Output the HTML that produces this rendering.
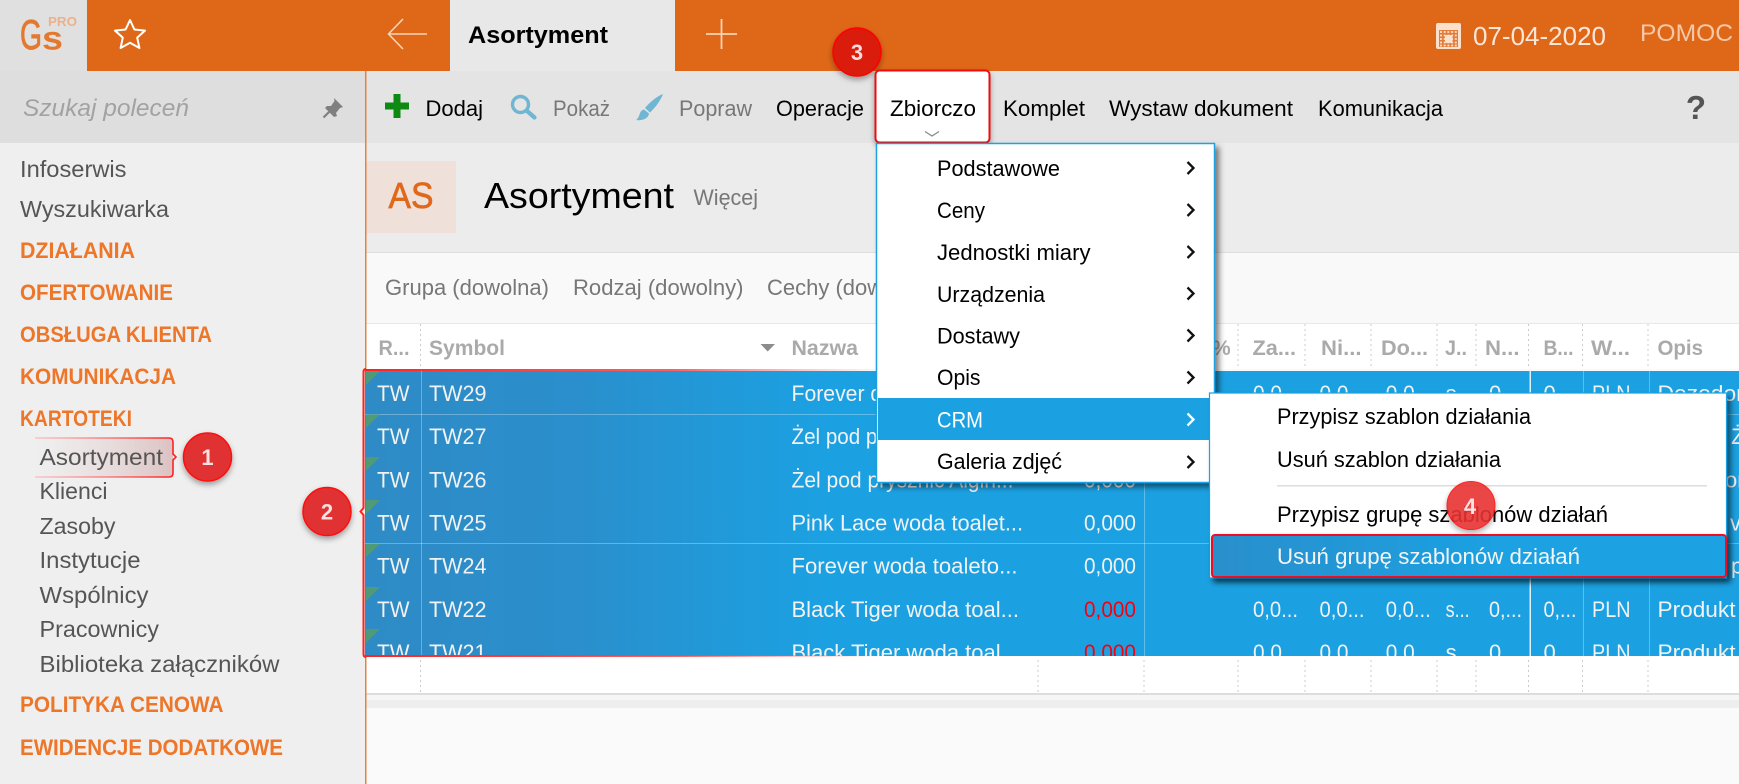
<!DOCTYPE html>
<html lang="pl"><head><meta charset="utf-8"><title>Asortyment</title>
<style>
html,body{margin:0;padding:0;background:#fafafa;width:1739px;height:784px;overflow:hidden}
svg{display:block}
text{font-family:"Liberation Sans",sans-serif;font-size:22px;fill:#000;white-space:pre}
.side{font-size:23.5px;fill:#555}
.cat{font-size:22.5px;font-weight:bold;fill:#ED7628}
.tb{fill:#000}
.gr{fill:#777}
.hd{fill:#aaa;font-weight:bold;font-size:21px}
.w{fill:#f2f2f2}
.r{fill:#f5000f}
.b{font-size:22px;font-weight:bold;fill:#fff;fill-opacity:.85}
</style></head><body>
<svg width="1739" height="784" viewBox="0 0 1739 784" xmlns="http://www.w3.org/2000/svg">
<defs>
<filter id="s1" x="-30%" y="-30%" width="160%" height="170%"><feDropShadow dx="0" dy="3" stdDeviation="3" flood-color="#000" flood-opacity=".35"/></filter>
<filter id="s2" x="-5%" y="-5%" width="112%" height="112%"><feDropShadow dx="4" dy="4" stdDeviation="3" flood-color="#000" flood-opacity=".5"/></filter>
<filter id="s3" x="-5%" y="-20%" width="110%" height="150%"><feDropShadow dx="2" dy="3" stdDeviation="3" flood-color="#000" flood-opacity=".35"/></filter>
<linearGradient id="sel" gradientUnits="userSpaceOnUse" x1="365" y1="0" x2="830" y2="0"><stop offset="0" stop-color="#2E8BC6"/><stop offset=".45" stop-color="#2A8FCC"/><stop offset="1" stop-color="#1BA1E2"/></linearGradient>
<linearGradient id="redf" gradientUnits="userSpaceOnUse" x1="365" y1="0" x2="880" y2="0"><stop offset="0" stop-color="#f22"/><stop offset=".6" stop-color="#f44" stop-opacity=".85"/><stop offset="1" stop-color="#f66" stop-opacity="0"/></linearGradient>
<linearGradient id="asf" gradientUnits="userSpaceOnUse" x1="35" y1="0" x2="173" y2="0"><stop offset="0" stop-color="#e8d8d8" stop-opacity="0"/><stop offset="1" stop-color="#dcc2c2"/></linearGradient>
<linearGradient id="asl" gradientUnits="userSpaceOnUse" x1="35" y1="0" x2="173" y2="0"><stop offset="0" stop-color="#f88" stop-opacity=".4"/><stop offset="1" stop-color="#f22"/></linearGradient>
<linearGradient id="del" gradientUnits="userSpaceOnUse" x1="1212" y1="0" x2="1500" y2="0"><stop offset="0" stop-color="#2A8FCC"/><stop offset="1" stop-color="#1BA1E2"/></linearGradient>
<clipPath id="rows"><rect x="365" y="371" width="1374" height="285"/></clipPath>
</defs>

<!-- backgrounds -->
<rect width="1739" height="784" fill="#fafafa"/>
<rect x="0" y="0" width="87" height="71" fill="#e0e0e0"/>
<rect x="87" y="0" width="1652" height="71" fill="#DF6818"/>
<rect x="450" y="0" width="225" height="71" fill="#e8e8e8"/>
<rect x="0" y="71" width="365" height="72" fill="#dedede"/>
<rect x="0" y="143" width="365" height="641" fill="#efefef"/>
<rect x="365" y="71" width="1374" height="72" fill="#e4e4e4"/>
<rect x="365" y="143" width="1374" height="110" fill="#ececec"/>
<rect x="365" y="253" width="1374" height="70" fill="#f9f9f9"/>
<rect x="365" y="252" width="1374" height="1" fill="#ddd"/>
<rect x="365" y="323" width="1374" height="46" fill="#fff"/>
<rect x="365" y="323" width="1374" height="1" fill="#e8e8e8"/>
<rect x="365" y="656" width="1374" height="37" fill="#fff"/>
<rect x="365" y="693" width="1374" height="2" fill="#ddd"/>
<rect x="365" y="695" width="1374" height="5" fill="#f6f6f6"/>
<rect x="365" y="700" width="1374" height="8" fill="#eee"/>
<rect x="365" y="71" width="1.5" height="713" fill="#E8813F"/>

<!-- logo -->
<text x="20" y="49" textLength="22" lengthAdjust="spacingAndGlyphs" style="font-size:42px;fill:#E4782F;stroke:#E4782F;stroke-width:.9">G</text>
<text x="42" y="49.5" textLength="21" lengthAdjust="spacingAndGlyphs" style="font-size:33px;font-weight:bold;fill:#E4782F">s</text>
<text x="48" y="26" textLength="29" lengthAdjust="spacingAndGlyphs" style="font-size:12.5px;font-weight:bold;fill:#EDB08C">PRO</text>

<!-- top bar icons -->
<polygon points="130,20 134.4,29.5 145,30.6 137.2,37.6 139.4,48 130,42.8 120.6,48 122.8,37.6 115,30.6 125.6,29.5" fill="none" stroke="#fff" stroke-width="2" stroke-linejoin="round"/>
<path d="M403 19L388.5 34L403 49M388.5 34H427" fill="none" stroke="#f8d3b8" stroke-width="1.6"/>
<text x="468" y="43" textLength="140" lengthAdjust="spacingAndGlyphs" style="font-size:24px;font-weight:bold">Asortyment</text>
<path d="M706 34H737M721.5 19V49" fill="none" stroke="#f8d3b8" stroke-width="1.8"/>
<rect x="1436" y="23" width="25" height="26" rx="2" fill="#fbe0cc"/>
<rect x="1439" y="30" width="19" height="17" fill="#E27D3B"/>
<path d="M1440 32H1458M1440 35.500H1458M1440 39H1458M1440 42.500H1458M1440 45.500H1458" stroke="#fbe0cc" stroke-width="1.800" stroke-dasharray="2 1.700"/>
<rect x="1445" y="35" width="7.500" height="8" fill="#fbe0cc"/>
<text x="1473" y="45" textLength="133" lengthAdjust="spacingAndGlyphs" style="font-size:26px;fill:#fbe6d8">07-04-2020</text>
<text x="1640" y="41" textLength="93" lengthAdjust="spacingAndGlyphs" style="font-size:24.5px;fill:#f5c8a8">POMOC</text>

<!-- search -->
<text x="23" y="116" textLength="166" lengthAdjust="spacingAndGlyphs" style="font-size:24.5px;font-style:italic;fill:#a2a2a2">Szukaj poleceń</text>
<path d="M334 98L343 107L340 108L336 113L337 116L334 117L325 108L327 106L331 106L334.500 101Z" fill="#808080"/>
<path d="M330 111L323.500 117.500" stroke="#808080" stroke-width="2.200"/>

<!-- sidebar -->
<text class="side" x="20" y="177" textLength="106.5" lengthAdjust="spacingAndGlyphs">Infoserwis</text>
<text class="side" x="20" y="217" textLength="149" lengthAdjust="spacingAndGlyphs">Wyszukiwarka</text>
<text class="cat" x="20" y="258" textLength="115" lengthAdjust="spacingAndGlyphs">DZIAŁANIA</text>
<text class="cat" x="20" y="300" textLength="153" lengthAdjust="spacingAndGlyphs">OFERTOWANIE</text>
<text class="cat" x="20" y="342" textLength="192" lengthAdjust="spacingAndGlyphs">OBSŁUGA KLIENTA</text>
<text class="cat" x="20" y="384" textLength="156" lengthAdjust="spacingAndGlyphs">KOMUNIKACJA</text>
<text class="cat" x="20" y="426" textLength="112" lengthAdjust="spacingAndGlyphs">KARTOTEKI</text>
<rect x="35" y="438" width="138" height="39" fill="url(#asf)"/>
<path d="M35 438H169Q173 438 173 442V454L176 457L173 460V473Q173 477 169 477H35" fill="none" stroke="url(#asl)" stroke-width="1.6"/>
<text class="side" x="39.5" y="465" textLength="123.5" lengthAdjust="spacingAndGlyphs">Asortyment</text>
<text class="side" x="39.5" y="499" textLength="68" lengthAdjust="spacingAndGlyphs">Klienci</text>
<text class="side" x="39.5" y="534" textLength="76" lengthAdjust="spacingAndGlyphs">Zasoby</text>
<text class="side" x="39.5" y="568" textLength="101" lengthAdjust="spacingAndGlyphs">Instytucje</text>
<text class="side" x="39.5" y="603" textLength="109" lengthAdjust="spacingAndGlyphs">Wspólnicy</text>
<text class="side" x="39.5" y="637" textLength="119.5" lengthAdjust="spacingAndGlyphs">Pracownicy</text>
<text class="side" x="39.5" y="672" textLength="240" lengthAdjust="spacingAndGlyphs">Biblioteka załączników</text>
<text class="cat" x="20" y="712" textLength="203.5" lengthAdjust="spacingAndGlyphs">POLITYKA CENOWA</text>
<text class="cat" x="20" y="755" textLength="263" lengthAdjust="spacingAndGlyphs">EWIDENCJE DODATKOWE</text>

<!-- toolbar -->
<path d="M385 102.500H409V109.500H385ZM393.500 94H400.500V118H393.500Z" fill="#0C8A12"/>
<text x="425.500" y="116" textLength="57.500" lengthAdjust="spacingAndGlyphs">Dodaj</text>
<circle cx="520.500" cy="104.500" r="8" fill="none" stroke="#6FB6D2" stroke-width="3.400"/>
<path d="M526.500 110.500L534.500 117.500" stroke="#6FB6D2" stroke-width="4.200" stroke-linecap="round"/>
<text class="gr" x="553" y="116" textLength="57" lengthAdjust="spacingAndGlyphs">Pokaż</text>
<path d="M663 94C657 96 649 103 645 108L650 112.500C655 108 661 100 663 94Z" fill="#6FB6D2"/>
<path d="M644 109.500C640 110.500 640 114 638.500 117C637.800 118.500 637 119.500 636 120C642 121 648.500 118.500 649 113.500Z" fill="#6FB6D2"/>
<text class="gr" x="679" y="116" textLength="73" lengthAdjust="spacingAndGlyphs">Popraw</text>
<text x="776" y="116" textLength="88" lengthAdjust="spacingAndGlyphs">Operacje</text>
<text x="1003" y="116" textLength="82" lengthAdjust="spacingAndGlyphs">Komplet</text>
<text x="1109" y="116" textLength="184" lengthAdjust="spacingAndGlyphs">Wystaw dokument</text>
<text x="1318" y="116" textLength="125" lengthAdjust="spacingAndGlyphs">Komunikacja</text>
<text x="1696" y="119" text-anchor="middle" style="font-size:33px;font-weight:bold;fill:#555">?</text>

<!-- heading -->
<rect x="366.500" y="161" width="89.500" height="72" fill="#EFE1DA"/>
<text x="388.500" y="208" textLength="45" lengthAdjust="spacingAndGlyphs" style="font-size:36px;fill:#E0681A;stroke:#E0681A;stroke-width:.7">AS</text>
<text x="484" y="208" textLength="190" lengthAdjust="spacingAndGlyphs" style="font-size:36px">Asortyment</text>
<text class="gr" x="693.500" y="205" textLength="64.500" lengthAdjust="spacingAndGlyphs">Więcej</text>

<!-- filters -->
<text class="gr" x="385" y="295" textLength="164" lengthAdjust="spacingAndGlyphs">Grupa (dowolna)</text>
<text class="gr" x="573" y="295" textLength="170.500" lengthAdjust="spacingAndGlyphs">Rodzaj (dowolny)</text>
<text class="gr" x="767" y="295" textLength="165" lengthAdjust="spacingAndGlyphs">Cechy (dowolne)</text>

<!-- table header -->
<text class="hd" x="378.500" y="355" textLength="31" lengthAdjust="spacingAndGlyphs">R...</text>
<text class="hd" x="429" y="355" textLength="76" lengthAdjust="spacingAndGlyphs">Symbol</text>
<polygon points="760.500,344 775,344 767.700,351.500" fill="#8c8c8c"/>
<text class="hd" x="791.500" y="355" textLength="66.500" lengthAdjust="spacingAndGlyphs">Nazwa</text>
<text class="hd" x="1212" y="355">%</text>
<text class="hd" x="1252.500" y="355" textLength="43.500" lengthAdjust="spacingAndGlyphs">Za...</text>
<text class="hd" x="1321" y="355" textLength="40.500" lengthAdjust="spacingAndGlyphs">Ni...</text>
<text class="hd" x="1381" y="355" textLength="47" lengthAdjust="spacingAndGlyphs">Do...</text>
<text class="hd" x="1445" y="355" textLength="22" lengthAdjust="spacingAndGlyphs">J..</text>
<text class="hd" x="1485" y="355" textLength="34.500" lengthAdjust="spacingAndGlyphs">N...</text>
<text class="hd" x="1543.500" y="355" textLength="30" lengthAdjust="spacingAndGlyphs">B...</text>
<text class="hd" x="1591" y="355" textLength="39" lengthAdjust="spacingAndGlyphs">W...</text>
<text class="hd" x="1657.500" y="355" textLength="45.500" lengthAdjust="spacingAndGlyphs">Opis</text>
<g stroke="#ccc" stroke-width="1" stroke-dasharray="2 3" fill="none">
<path d="M420.500 324V369M1238 324V369M1305 324V369M1371 324V369M1437 324V369M1476 324V369M1528.500 324V369M1582.500 324V369M1648 324V369"/>
<path d="M420.500 660V694M1038 660V694M1144 660V694M1238 660V694M1305 660V694M1371 660V694M1437 660V694M1476 660V694M1528.500 660V694M1582.500 660V694M1648 660V694"/>
</g>

<!-- selected rows -->
<rect x="365" y="371" width="1374" height="285" fill="url(#sel)"/>
<g clip-path="url(#rows)">
<g fill="#fff" fill-opacity=".3">
<rect x="365" y="414" width="1374" height="1"/><rect x="365" y="543" width="1374" height="1"/>
<rect x="421" y="371" width="1" height="285"/><rect x="1144" y="371" width="1" height="285"/>
<rect x="1583" y="371" width="1" height="285"/><rect x="1649" y="371" width="1" height="285"/>
</g>
<rect x="1529.500" y="371" width="1.500" height="285" fill="#fff" fill-opacity=".85"/>
<g fill="#4F9A78">
<polygon points="366,371 380,371 366,385"/><polygon points="366,414.500 380,414.500 366,428"/><polygon points="366,457 380,457 366,471"/><polygon points="366,500 380,500 366,514"/><polygon points="366,544 380,544 366,557"/><polygon points="366,587 380,587 366,601"/><polygon points="366,629 380,629 366,643"/>
</g>
<g class="rowtxt">
<text class="w" x="377" y="401" textLength="32.500" lengthAdjust="spacingAndGlyphs">TW</text><text class="w" x="429" y="401" textLength="57.500" lengthAdjust="spacingAndGlyphs">TW29</text>
<text class="w" x="377" y="444" textLength="32.500" lengthAdjust="spacingAndGlyphs">TW</text><text class="w" x="429" y="444" textLength="57.500" lengthAdjust="spacingAndGlyphs">TW27</text>
<text class="w" x="377" y="487.500" textLength="32.500" lengthAdjust="spacingAndGlyphs">TW</text><text class="w" x="429" y="487.500" textLength="57.500" lengthAdjust="spacingAndGlyphs">TW26</text>
<text class="w" x="377" y="530.500" textLength="32.500" lengthAdjust="spacingAndGlyphs">TW</text><text class="w" x="429" y="530.500" textLength="57.500" lengthAdjust="spacingAndGlyphs">TW25</text>
<text class="w" x="377" y="573.500" textLength="32.500" lengthAdjust="spacingAndGlyphs">TW</text><text class="w" x="429" y="573.500" textLength="57.500" lengthAdjust="spacingAndGlyphs">TW24</text>
<text class="w" x="377" y="617" textLength="32.500" lengthAdjust="spacingAndGlyphs">TW</text><text class="w" x="429" y="617" textLength="57.500" lengthAdjust="spacingAndGlyphs">TW22</text>
<text class="w" x="377" y="660" textLength="32.500" lengthAdjust="spacingAndGlyphs">TW</text><text class="w" x="429" y="660" textLength="57.500" lengthAdjust="spacingAndGlyphs">TW21</text>

<text class="w" x="791.500" y="401" textLength="185" lengthAdjust="spacingAndGlyphs">Forever dezodorant</text>
<text class="w" x="791.500" y="444" textLength="150" lengthAdjust="spacingAndGlyphs">Żel pod prysznic</text>
<text class="w" x="791.500" y="487.500" textLength="222" lengthAdjust="spacingAndGlyphs">Żel pod prysznic Algin...</text>
<text class="w" x="791.500" y="530.500" textLength="231.500" lengthAdjust="spacingAndGlyphs">Pink Lace woda toalet...</text>
<text class="w" x="791.500" y="573.500" textLength="226" lengthAdjust="spacingAndGlyphs">Forever woda toaleto...</text>
<text class="w" x="791.500" y="617" textLength="227.500" lengthAdjust="spacingAndGlyphs">Black Tiger woda toal...</text>
<text class="w" x="791.500" y="660" textLength="227.500" lengthAdjust="spacingAndGlyphs">Black Tiger woda toal...</text>

<text class="w" x="1084" y="487.500" textLength="52" lengthAdjust="spacingAndGlyphs">0,000</text>
<text class="w" x="1084" y="530.500" textLength="52" lengthAdjust="spacingAndGlyphs">0,000</text>
<text class="w" x="1084" y="573.500" textLength="52" lengthAdjust="spacingAndGlyphs">0,000</text>
<text class="r" x="1084" y="617" textLength="52" lengthAdjust="spacingAndGlyphs">0,000</text>
<text class="r" x="1084" y="660" textLength="52" lengthAdjust="spacingAndGlyphs">0,000</text>

<text class="w" x="1253" y="401" textLength="29" lengthAdjust="spacingAndGlyphs">0,0</text><text class="w" x="1319.500" y="401" textLength="29" lengthAdjust="spacingAndGlyphs">0,0</text><text class="w" x="1385.700" y="401" textLength="29" lengthAdjust="spacingAndGlyphs">0,0</text><text class="w" x="1445.600" y="401">s</text><text class="w" x="1489" y="401">0</text><text class="w" x="1543.500" y="401">0</text><text class="w" x="1592" y="401" textLength="38.500" lengthAdjust="spacingAndGlyphs">PLN</text><text class="w" x="1657.500" y="401" textLength="118" lengthAdjust="spacingAndGlyphs">Dezodorant</text>

<text class="w" x="1253" y="617" textLength="45" lengthAdjust="spacingAndGlyphs">0,0...</text><text class="w" x="1319.500" y="617" textLength="45" lengthAdjust="spacingAndGlyphs">0,0...</text><text class="w" x="1385.700" y="617" textLength="45" lengthAdjust="spacingAndGlyphs">0,0...</text><text class="w" x="1445.600" y="617" textLength="24" lengthAdjust="spacingAndGlyphs">s...</text><text class="w" x="1489" y="617" textLength="33" lengthAdjust="spacingAndGlyphs">0,...</text><text class="w" x="1543.500" y="617" textLength="33" lengthAdjust="spacingAndGlyphs">0,...</text><text class="w" x="1592" y="617" textLength="38.500" lengthAdjust="spacingAndGlyphs">PLN</text><text class="w" x="1657.500" y="617" textLength="78" lengthAdjust="spacingAndGlyphs">Produkt</text>

<text class="w" x="1253" y="660" textLength="29" lengthAdjust="spacingAndGlyphs">0,0</text><text class="w" x="1319.500" y="660" textLength="29" lengthAdjust="spacingAndGlyphs">0,0</text><text class="w" x="1385.700" y="660" textLength="29" lengthAdjust="spacingAndGlyphs">0,0</text><text class="w" x="1445.600" y="660">s</text><text class="w" x="1489" y="660">0</text><text class="w" x="1543.500" y="660">0</text><text class="w" x="1592" y="660" textLength="38.500" lengthAdjust="spacingAndGlyphs">PLN</text><text class="w" x="1657.500" y="660" textLength="78" lengthAdjust="spacingAndGlyphs">Produkt</text>

<text class="w" x="1731" y="444">Ż</text>
<text class="w" x="1725" y="487.500">or</text>
<text class="w" x="1730" y="530.500">v</text>
<text class="w" x="1731" y="573.500">p</text>
</g>
</g>
<!-- red selection outline -->
<rect x="365" y="369" width="520" height="2" fill="url(#redf)"/>
<rect x="365" y="655" width="520" height="2" fill="url(#redf)"/>
<path d="M366 369Q363.500 369 363.500 372V508L360.500 511.500L363.500 515V654Q363.500 657 366 657" fill="none" stroke="#f22" stroke-width="2"/>

<!-- badge 2 and 1 -->
<g filter="url(#s1)"><circle cx="207.500" cy="457" r="24" fill="#E03030" stroke="#f11" stroke-width="1.500"/></g>
<text class="b" x="207.500" y="465" text-anchor="middle">1</text>
<g filter="url(#s1)"><circle cx="327" cy="511.500" r="24" fill="#E03030" stroke="#f11" stroke-width="1.500"/></g>
<text class="b" x="327" y="519.500" text-anchor="middle">2</text>

<!-- badge 3 -->
<g filter="url(#s1)"><circle cx="857" cy="52" r="24" fill="#DA1A0E" stroke="#f00" stroke-width="1.500"/></g>
<text class="b" x="857" y="60" text-anchor="middle">3</text>

<!-- Zbiorczo -->
<g filter="url(#s1)"><rect x="875.500" y="70.500" width="114" height="72" rx="4" fill="#fff" stroke="#ee1111" stroke-width="2"/></g>
<text x="890" y="116" textLength="86" lengthAdjust="spacingAndGlyphs">Zbiorczo</text>
<path d="M925 131.500L932 136L939 131.500" fill="none" stroke="#888" stroke-width="1.300"/>

<!-- dropdown menu -->
<g filter="url(#s2)"><rect x="876.500" y="143.500" width="338" height="339" fill="#fff" stroke="#1BA1E2" stroke-width="1.500"/></g>
<rect x="878" y="398" width="336" height="42" fill="#1BA1E2"/>
<text x="937" y="176" textLength="123" lengthAdjust="spacingAndGlyphs">Podstawowe</text>
<text x="937" y="218" textLength="48" lengthAdjust="spacingAndGlyphs">Ceny</text>
<text x="937" y="260" textLength="153.500" lengthAdjust="spacingAndGlyphs">Jednostki miary</text>
<text x="937" y="302" textLength="108" lengthAdjust="spacingAndGlyphs">Urządzenia</text>
<text x="937" y="343.500" textLength="83" lengthAdjust="spacingAndGlyphs">Dostawy</text>
<text x="937" y="385" textLength="43.500" lengthAdjust="spacingAndGlyphs">Opis</text>
<text x="937" y="427.500" textLength="46" lengthAdjust="spacingAndGlyphs" style="fill:#fff">CRM</text>
<text x="937" y="469" textLength="125" lengthAdjust="spacingAndGlyphs">Galeria zdjęć</text>
<g fill="none" stroke="#111" stroke-width="2.300">
<path d="M1187.500 162L1193.500 168L1187.500 174M1187.500 204L1193.500 210L1187.500 216M1187.500 246L1193.500 252L1187.500 258M1187.500 287.500L1193.500 293.500L1187.500 299.500M1187.500 329.500L1193.500 335.500L1187.500 341.500M1187.500 371.500L1193.500 377.500L1187.500 383.500M1187.500 456L1193.500 462L1187.500 468"/>
<path d="M1187.500 413.500L1193.500 419.500L1187.500 425.500" stroke="#fff"/>
</g>

<!-- submenu -->
<g filter="url(#s2)"><rect x="1209.500" y="393" width="517" height="185" fill="#fff" stroke="#1BA1E2" stroke-width="1.200"/></g>
<text x="1277" y="424" textLength="254" lengthAdjust="spacingAndGlyphs">Przypisz szablon działania</text>
<text x="1277" y="467" textLength="224" lengthAdjust="spacingAndGlyphs">Usuń szablon działania</text>
<rect x="1277" y="485" width="430" height="1.500" fill="#ddd"/>
<text x="1277" y="522" textLength="331" lengthAdjust="spacingAndGlyphs">Przypisz grupę szablonów działań</text>
<g filter="url(#s1)" opacity=".9"><circle cx="1471" cy="505.500" r="24" fill="#E83030" stroke="#f11" stroke-width="1"/></g>
<text class="b" x="1470" y="514" text-anchor="middle">4</text>
<g filter="url(#s3)"><rect x="1212" y="535" width="514" height="42" rx="3" fill="url(#del)" stroke="#ee1122" stroke-width="2"/></g>
<text x="1277" y="564" textLength="303" lengthAdjust="spacingAndGlyphs" style="fill:#f4f4f4">Usuń grupę szablonów działań</text>
</svg>
</body></html>
